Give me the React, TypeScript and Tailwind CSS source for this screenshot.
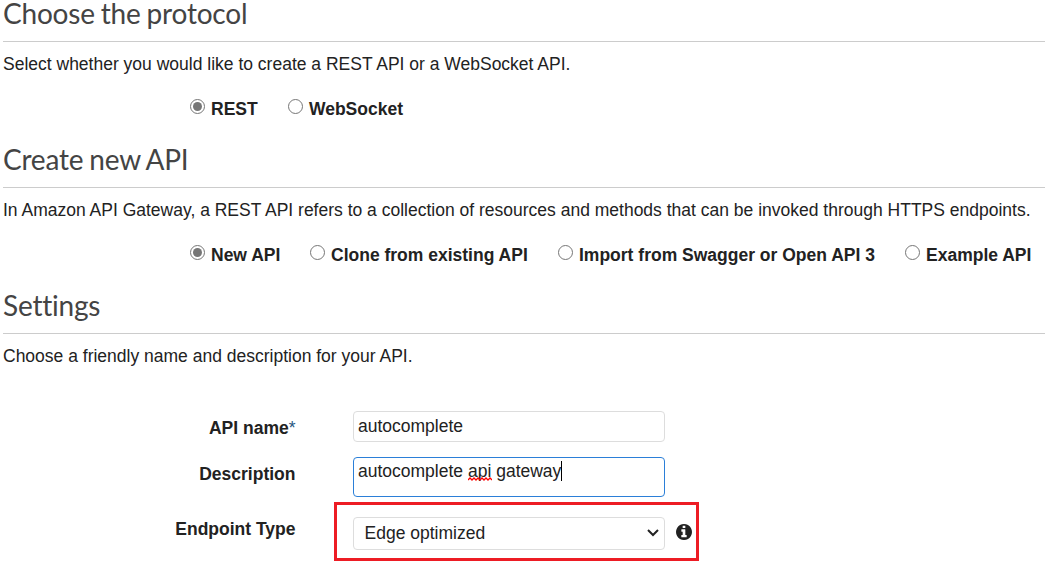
import type { ReactNode } from "react";

type Option = { label: string; checked?: boolean; className: string };

function Radio({ name, option }: { name: string; option: Option }) {
  return (
    <label className={`flex shrink-0 items-start whitespace-nowrap ${option.className}`}>
      <span className="relative mr-[6px] h-[15px] w-[15px] shrink-0">
        <input
          type="radio"
          name={name}
          defaultChecked={option.checked}
          className="peer block h-[15px] w-[15px] appearance-none rounded-full border border-[#767676] bg-white"
        />
        <span className="pointer-events-none absolute top-[3px] left-[3px] hidden h-[9px] w-[9px] rounded-full bg-[#767676] peer-checked:block" />
      </span>
      <span className="text-[17.5px] leading-[20px] font-bold">{option.label}</span>
    </label>
  );
}

function Section({ title, text, children }: { title: string; text: string; children?: ReactNode }) {
  return (
    <section className="h-[146px]">
      <h2 className="h-[42px] border-b border-[#cccccc] font-[Lato,sans-serif] text-[28px] leading-[27px] tracking-[-0.2px] [word-spacing:-1px] text-[#444444]">
        {title}
      </h2>
      <p className="mt-[12px] text-[17.5px] leading-[20px] whitespace-nowrap">{text}</p>
      {children}
    </section>
  );
}

function RadioRow({ name, options }: { name: string; options: Option[] }) {
  return (
    <div className="mt-[25px] flex pl-[187px]">
      {options.map((option) => (
        <Radio key={option.label} name={name} option={option} />
      ))}
    </div>
  );
}

const protocols: Option[] = [
  { label: "REST", checked: true, className: "w-[98px]" },
  { label: "WebSocket", className: "w-[120px]" },
];

const sources: Option[] = [
  { label: "New API", checked: true, className: "w-[120px]" },
  { label: "Clone from existing API", className: "w-[248px]" },
  { label: "Import from Swagger or Open API 3", className: "w-[347px]" },
  { label: "Example API", className: "w-[124px]" },
];

export default function App() {
  return (
    <main className="h-[570px] w-full overflow-hidden bg-white pl-[3px] font-['Liberation_Sans',Arial,sans-serif] text-[17.5px] text-[#222222]">
      <div>
        <Section title="Choose the protocol" text="Select whether you would like to create a REST API or a WebSocket API.">
          <RadioRow name="protocol" options={protocols} />
        </Section>
        <Section
          title="Create new API"
          text="In Amazon API Gateway, a REST API refers to a collection of resources and methods that can be invoked through HTTPS endpoints."
        >
          <RadioRow name="source" options={sources} />
        </Section>
        <Section title="Settings" text="Choose a friendly name and description for your API." />
      </div>

      <form className="mt-[-27px]">
        <div className="flex h-[31px]">
          <label className="w-[292.5px] pt-[7px] text-right leading-[20px] font-bold">
            API name<span className="font-normal text-[#27567f]">*</span>
          </label>
          <input
            defaultValue="autocomplete"
            className="ml-[57.5px] h-[31px] w-[312px] rounded-[4px] border border-[#dddddd] px-[4px] pb-[1px] outline-none"
          />
        </div>

        <div className="mt-[15px] flex h-[40px]">
          <label className="w-[292.5px] pt-[7px] text-right leading-[20px] font-bold">Description</label>
          <div className="ml-[57.5px] flex h-[40px] w-[312px] items-start rounded-[4px] border border-[#2b7fd8] pt-[3px] pl-[4px]">
            <span className="leading-[20px] whitespace-pre">
              autocomplete{" "}
              <span className="relative">
                api
                <svg className="absolute top-[16px] left-0" width="24" height="4" viewBox="0 0 24 4" fill="none">
                  <path d="M0 3 2 1 4 3 6 1 8 3 10 1 12 3 14 1 16 3 18 1 20 3 22 1 24 3" stroke="#f00" strokeWidth="1.3" />
                </svg>
              </span>
              {" gateway"}
            </span>
            <span className="h-[20px] w-px bg-black" />
          </div>
        </div>

        <div className="mt-[5px] flex h-[59px]">
          <label className="w-[292.5px] pt-[17px] text-right leading-[20px] font-bold">Endpoint Type</label>
          <div className="ml-[38.5px] flex h-[59px] w-[365px] items-center border-[3px] border-[#ed1c24] pt-[3px] pl-[16px]">
            <div className="flex h-[33px] w-[312px] items-center justify-between rounded-[4px] border border-[#dddddd] pr-[5px] pl-[10.5px]">
              <span className="pb-px leading-[20px]">Edge optimized</span>
              <svg width="12" height="8" viewBox="0 0 12 8" fill="none">
                <path d="m1 1 5 5 5-5" stroke="#222" strokeWidth="2" />
              </svg>
            </div>
            <svg viewBox="0 128 1536 1536" className="mb-[2px] ml-[11px] h-[16px] w-[16px] shrink-0" fill="#222222">
              <path d="M1024 1376v-160q0-14-9-23t-23-9h-96v-512q0-14-9-23t-23-9h-320q-14 0-23 9t-9 23v160q0 14 9 23t23 9h96v320h-96q-14 0-23 9t-9 23v160q0 14 9 23t23 9h448q14 0 23-9t9-23zm-128-896v-160q0-14-9-23t-23-9h-192q-14 0-23 9t-9 23v160q0 14 9 23t23 9h192q14 0 23-9t9-23zm640 416q0 209-103 385.5t-279.5 279.5-385.5 103-385.5-103-279.5-279.5-103-385.5 103-385.5 279.5-279.5 385.5-103 385.5 103 279.5 279.5 103 385.5z" />
            </svg>
          </div>
        </div>
      </form>
    </main>
  );
}
